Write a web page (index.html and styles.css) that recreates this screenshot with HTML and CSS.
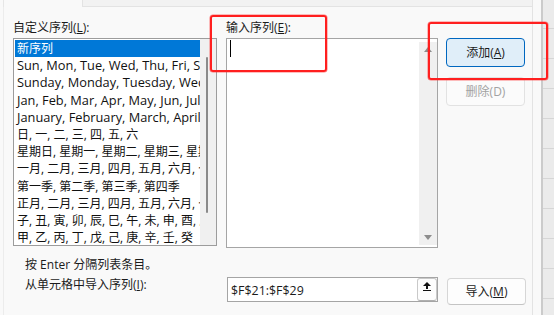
FILE: index.html
```html
<!DOCTYPE html>
<html lang="zh-CN">
<head>
<meta charset="utf-8">
<title>自定义序列</title>
<link rel="stylesheet" href="styles.css">
</head>
<body>
<div class="screen">
  <div class="dialog">
    <div class="tabs">
      <div class="tab-active"></div>
      <div class="tab-rest"></div>
    </div>
    <div class="page">
      <div class="top-row">
        <div class="col-list">
          <div class="label">自定义序列(<u>L</u>):</div>
          <div class="listbox">
            <ul class="items">
              <li class="sel cjk">新序列</li>
              <li>Sun, Mon, Tue, Wed, Thu, Fri, Sat</li>
              <li>Sunday, Monday, Tuesday, Wednesday, Thursday</li>
              <li>Jan, Feb, Mar, Apr, May, Jun, Jul, Aug</li>
              <li>January, February, March, April, May</li>
              <li class="cjk">日, 一, 二, 三, 四, 五, 六</li>
              <li class="cjk">星期日, 星期一, 星期二, 星期三, 星期四</li>
              <li class="cjk">一月, 二月, 三月, 四月, 五月, 六月, 七月</li>
              <li class="cjk">第一季, 第二季, 第三季, 第四季</li>
              <li class="cjk">正月, 二月, 三月, 四月, 五月, 六月, 七月</li>
              <li class="cjk">子, 丑, 寅, 卯, 辰, 巳, 午, 未, 申, 酉, 戌, 亥</li>
              <li class="cjk">甲, 乙, 丙, 丁, 戊, 己, 庚, 辛, 壬, 癸</li>
            </ul>
            <div class="vscroll"><div class="thumb"></div></div>
          </div>
        </div>
        <div class="col-entry">
          <div class="label">输入序列(<u>E</u>):</div>
          <div class="textarea">
            <div class="textarea-body"><span class="caret"></span></div>
            <div class="vscroll2">
              <span class="arrow-up"></span>
              <span class="arrow-down"></span>
            </div>
          </div>
        </div>
        <div class="col-buttons">
          <button class="btn btn-primary">添加(<u>A</u>)</button>
          <button class="btn btn-disabled">删除(D)</button>
        </div>
      </div>
      <div class="hint">按 Enter 分隔列表条目。</div>
      <div class="import-row">
        <div class="import-label">从单元格中导入序列(<u>I</u>):</div>
        <div class="ref-input">
          <span class="ref-text">$F$21:$F$29</span>
          <span class="collapse">
            <svg width="8" height="9" viewBox="0 0 8 9"><path d="M4 0 L8 4 L5 4 L5 7 L3 7 L3 4 L0 4 Z" fill="#111"/><rect x="0" y="8" width="8" height="1" fill="#111"/></svg>
          </span>
        </div>
        <button class="btn btn-normal">导入(<u>M</u>)</button>
      </div>
    </div>
  </div>
  <div class="sheet"></div>
  <div class="mark mark-entry"></div>
  <div class="mark mark-add"></div>
</div>
</body>
</html>
```

FILE: styles.css
```css
* { box-sizing: border-box; }
html, body { margin: 0; padding: 0; }
body {
  font-family: "Open Sans", "Noto Sans CJK SC", sans-serif;
  font-size: 12px;
  color: #1b1b1b;
  background: #f9f9f9;
}
u { text-decoration: underline; text-underline-offset: 1px; }

.screen {
  position: relative;
  width: 554px;
  height: 315px;
  display: flex;
  overflow: hidden;
}

.dialog {
  width: 543px;
  height: 315px;
  background: #f9f9f9;
  border-right: 2px solid #cbcbcb;
  display: flex;
  flex-direction: column;
}

.tabs {
  display: flex;
  height: 7px;
  padding-left: 3px;
}
.tab-active {
  width: 79px;
  height: 7px;
  border-left: 1px solid #e6e6e6;
}
.tab-rest {
  width: 451px;
  height: 7px;
  background: #f2f2f2;
  border-left: 1px solid #e3e3e3;
  border-right: 1px solid #e3e3e3;
  border-bottom: 1px solid #e3e3e3;
}

.page {
  margin-left: 3px;
  width: 530px;
  flex: 1;
  border-left: 1px solid #ececec;
  border-right: 1px solid #e3e3e3;
  padding: 13px 0 0 9px;
}

.top-row {
  display: flex;
  align-items: flex-start;
}

.label {
  height: 16px;
  line-height: 16px;
  margin-bottom: 2px;
  white-space: nowrap;
}

.col-list { width: 204px; }
.listbox {
  height: 208px;
  border: 1px solid #9c9c9c;
  background: #fff;
  padding: 1px 0 1px 1px;
  display: flex;
}
.items {
  list-style: none;
  margin: 0;
  padding: 0;
  width: 185px;
  overflow: hidden;
  font-size: 12.8px;
}
.items li {
  height: 17.2px;
  line-height: 17.2px;
  padding-left: 2px;
  white-space: nowrap;
  overflow: hidden;
  color: #111;
}
.items li.cjk { font-size: 12px; }
.items li.sel {
  background: #0078d7;
  color: #fff;
}
.vscroll {
  width: 16px;
  background: #f0f0f0;
  margin-top: -1px;
  margin-bottom: -1px;
  padding: 18px 0 0 6px;
}
.thumb {
  width: 2px;
  height: 156px;
  background: #8a8a8a;
  border-radius: 1px;
}

.col-entry {
  width: 212px;
  margin-left: 9px;
}
.textarea {
  height: 210px;
  border: 1px solid #a5a5a5;
  background: #fff;
  display: flex;
}
.textarea-body {
  flex: 1;
  padding: 1px 0 0 3px;
}
.caret {
  display: block;
  width: 1px;
  height: 17px;
  background: #000;
}
.vscroll2 {
  width: 18px;
  margin: 3px 0 2px 0;
  background: #f0f0f0;
  display: flex;
  flex-direction: column;
  justify-content: space-between;
  align-items: center;
  padding: 5px 0 5px 0;
}
.arrow-up {
  width: 0; height: 0;
  border-left: 4px solid transparent;
  border-right: 4px solid transparent;
  border-bottom: 5px solid #8d8d8d;
}
.arrow-down {
  width: 0; height: 0;
  border-left: 4px solid transparent;
  border-right: 4px solid transparent;
  border-top: 5px solid #8d8d8d;
}

.col-buttons {
  width: 80px;
  margin-left: 8px;
  padding-top: 18px;
  display: flex;
  flex-direction: column;
  gap: 10px;
}

.btn {
  font-family: "Open Sans", "Noto Sans CJK SC", sans-serif;
  font-size: 12px;
  width: 79px;
  height: 29px;
  border-radius: 4px;
  padding: 0;
  line-height: 16px;
  color: #1b1b1b;
}
.btn-primary {
  background: #e0eef9;
  border: 1px solid #0067c0;
}
.btn-disabled {
  background: #fbfbfb;
  border: 1px solid #e2e2e2;
  color: #a2a2a2;
}
.btn-normal {
  background: #fdfdfd;
  border: 1px solid #d6d6d6;
  border-bottom-color: #c4c4c4;
  height: 27px;
  margin-top: 1px;
  margin-left: 9px;
}

.hint {
  margin: 9px 0 0 12px;
  height: 16px;
  line-height: 16px;
}

.import-row {
  display: flex;
  align-items: flex-start;
  margin-top: 4px;
}
.import-label {
  width: 202px;
  margin-left: 12px;
  line-height: 16px;
  white-space: nowrap;
}
.ref-input {
  width: 211px;
  height: 25px;
  border: 1px solid #a5a5a5;
  background: #fff;
  display: flex;
  align-items: center;
  justify-content: space-between;
  padding-left: 3px;
}
.ref-text {
  line-height: 16px;
  font-size: 12.4px;
  margin-top: 2px;
}
.collapse {
  align-self: stretch;
  width: 20px;
  border: 1px solid #c9c9c9;
  border-bottom-color: #b0b0b0;
  border-radius: 3px;
  background: #fdfdfd;
  padding: 3px 0 0 5px;
  display: flex;
  align-items: flex-start;
}

.sheet {
  flex: 1;
  height: 315px;
  background: repeating-linear-gradient(to bottom, #ebebeb 0, #ebebeb 29px, #d6d6d6 29px, #d6d6d6 30px);
  background-position: 0 -1px;
}

.mark {
  position: absolute;
  border: 2px solid #ff1f1f;
  border-radius: 3px;
  box-shadow: 0 0 0 0.5px rgba(255, 40, 40, 0.6);
}
.mark-entry {
  left: 210px;
  top: 15px;
  width: 117px;
  height: 57px;
}
.mark-add {
  left: 428px;
  top: 22px;
  width: 120px;
  height: 58px;
}
```
